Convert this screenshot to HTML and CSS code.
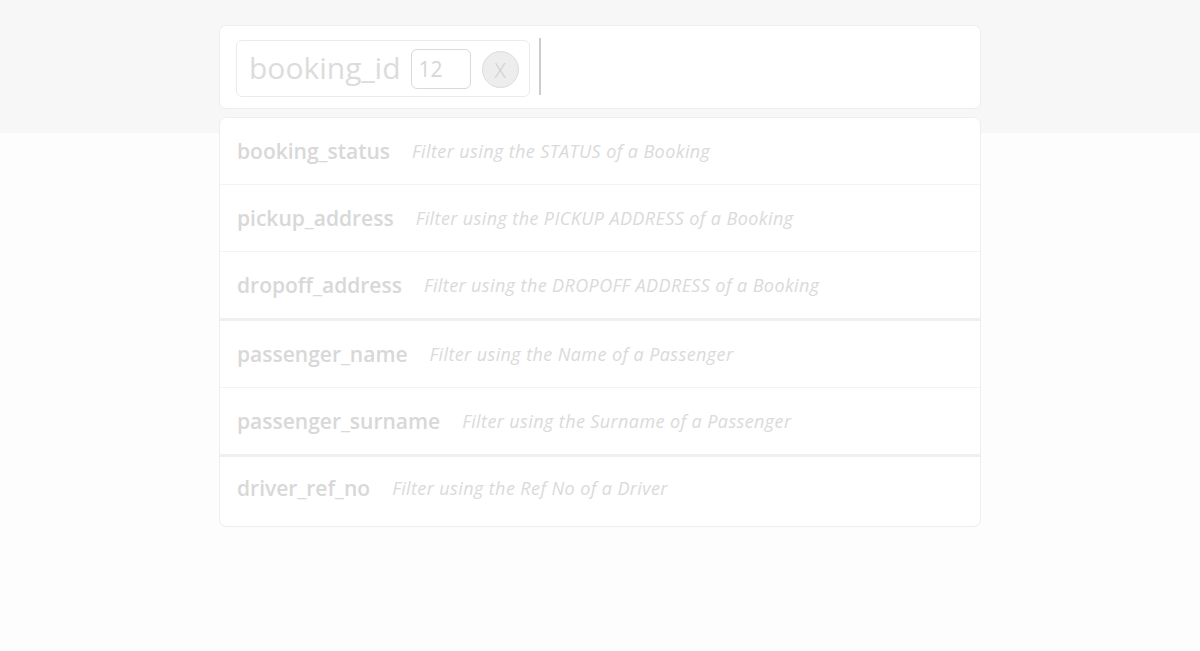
FILE: index.html
```html
<!DOCTYPE html>
<html>
<head>
<meta charset="utf-8">
<link rel="stylesheet" href="styles.css">
</head>
<body>
<div class="page">
  <div class="wrap">
    <div class="search">
      <div class="chip">
        <span class="chip-label">booking_id</span>
        <span class="chip-input">12</span>
        <span class="chip-close">X</span>
      </div>
      <span class="cursor"></span>
    </div>
    <div class="dropdown">
      <div class="group">
        <div class="row"><span class="key">booking_status</span><span class="desc">Filter using the STATUS of a Booking</span></div>
        <div class="row"><span class="key">pickup_address</span><span class="desc">Filter using the PICKUP ADDRESS of a Booking</span></div>
        <div class="row"><span class="key">dropoff_address</span><span class="desc">Filter using the DROPOFF ADDRESS of a Booking</span></div>
      </div>
      <div class="group">
        <div class="row"><span class="key">passenger_name</span><span class="desc">Filter using the Name of a Passenger</span></div>
        <div class="row"><span class="key">passenger_surname</span><span class="desc">Filter using the Surname of a Passenger</span></div>
      </div>
      <div class="group">
        <div class="row last"><span class="key">driver_ref_no</span><span class="desc">Filter using the Ref No of a Driver</span></div>
      </div>
    </div>
  </div>
</div>
</body>
</html>
```
FILE: styles.css
```css
html, body {
  margin: 0;
  padding: 0;
  font-family: "Open Sans", "Lato", sans-serif;
}
html {
  background: #fdfdfd;
}
.page {
  min-height: 651px;
  padding-top: 25px;
  box-sizing: border-box;
  background: linear-gradient(to bottom, #f7f7f7 0, #f7f7f7 133px, #fdfdfd 133px, #fdfdfd 100%);
}
.wrap {
  width: 762px;
  margin: 0 auto;
  display: flex;
  flex-direction: column;
  gap: 8px;
}
.search {
  box-sizing: border-box;
  height: 84px;
  background: #ffffff;
  border: 1px solid #f3ecec;
  border-radius: 7px;
  padding: 14px 16px 11px;
  display: flex;
  align-items: flex-start;
  gap: 9px;
}
.chip {
  box-sizing: border-box;
  height: 57px;
  border: 1px solid #efeaea;
  border-radius: 6px;
  padding: 0 10px 0 12px;
  display: flex;
  align-items: center;
}
.chip-label {
  font-size: 30px;
  color: #dcdcdc;
  margin-right: 10px;
  padding-bottom: 3px;
}
.chip-input {
  box-sizing: border-box;
  width: 60px;
  height: 40px;
  border: 1px solid #d9d9d9;
  border-radius: 6px;
  font-size: 21px;
  color: #d6d6d6;
  padding-left: 7px;
  display: flex;
  align-items: center;
  margin-right: 11px;
}
.chip-close {
  box-sizing: border-box;
  width: 37px;
  height: 37px;
  border-radius: 50%;
  background: #ededed;
  border: 1px solid #dcdcdc;
  color: #cfcfcf;
  font-size: 21px;
  font-weight: 300;
  display: flex;
  align-items: center;
  justify-content: center;
  margin-top: 2px;
}
.cursor {
  width: 2px;
  height: 57px;
  background: #cccccc;
  margin-top: -2px;
}
.dropdown {
  background: #ffffff;
  border: 1px solid #f3ecec;
  border-radius: 7px;
  overflow: hidden;
}
.group + .group {
  border-top: 3px solid #efefef;
}
.row {
  height: 66px;
  display: flex;
  align-items: center;
  padding-left: 17px;
  gap: 22px;
}
.row + .row {
  border-top: 1px solid #f3f3f3;
}
.row.last {
  height: 69px;
  padding-bottom: 8px;
  box-sizing: border-box;
}
.key {
  font-size: 21px;
  font-weight: 600;
  color: #d8d8d8;
}
.desc {
  font-size: 18px;
  letter-spacing: 0.4px;
  font-style: italic;
  color: #dadada;
}
```
